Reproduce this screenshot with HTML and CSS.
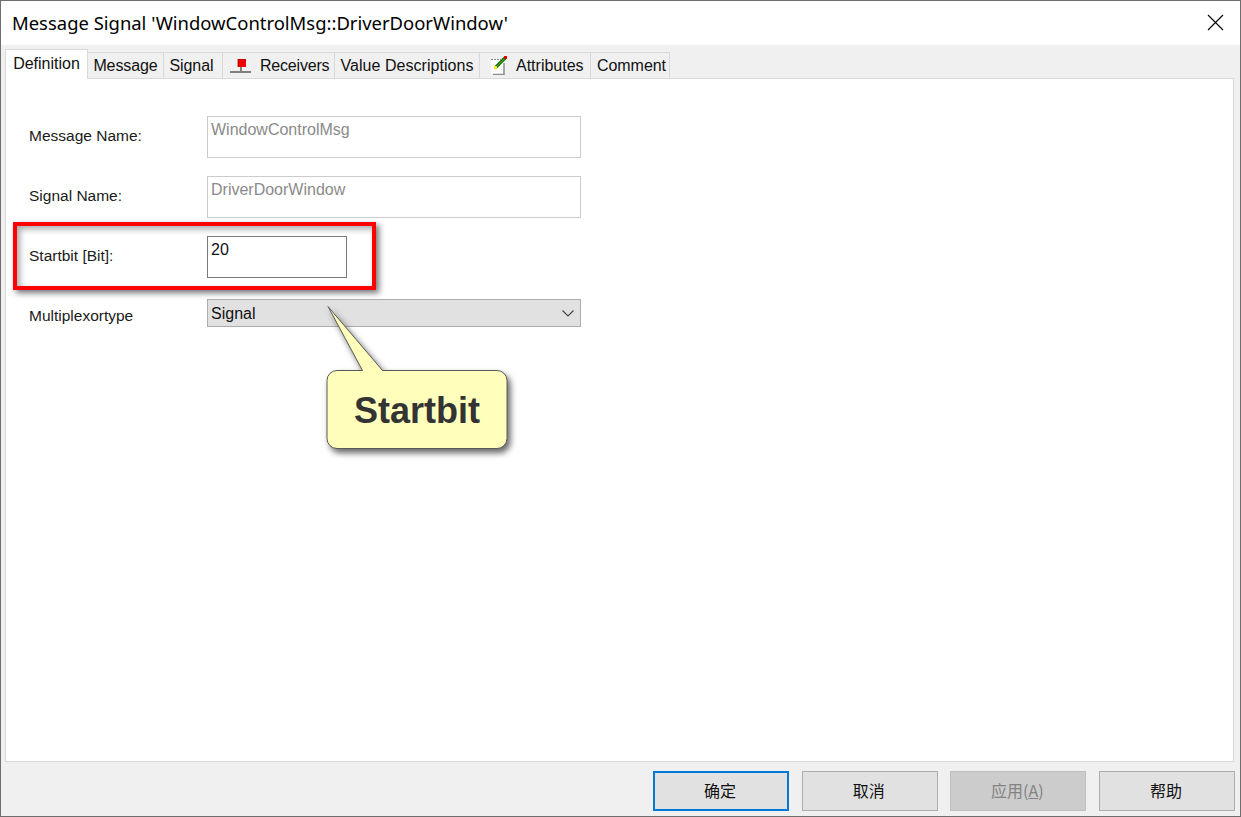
FILE: index.html
```html
<!DOCTYPE html>
<html lang="en">
<head>
<meta charset="utf-8">
<title>Message Signal</title>
<link rel="stylesheet" href="styles.css">
</head>
<body>
<div class="window">
  <header class="titlebar">
    <span class="title">Message Signal 'WindowControlMsg::DriverDoorWindow'</span>
    <svg class="close" width="17" height="17" viewBox="0 0 17 17"><path d="M1 1L16 16M16 1L1 16" stroke="#000" stroke-width="1.1" fill="none"/></svg>
  </header>
  <div class="content">
    <nav class="tabs">
      <div class="tab active t-def">Definition</div>
      <div class="tab t-msg">Message</div>
      <div class="tab t-sig">Signal</div>
      <div class="tab t-rec">
        <svg class="tab-icon" width="22" height="16" viewBox="0 0 22 16"><rect x="0" y="12" width="21" height="2" fill="#808080"/><rect x="10" y="7" width="2" height="5" fill="#808080"/><rect x="8" y="0" width="8" height="8" fill="#f00000"/><path d="M8 8V0h8" fill="none" stroke="#a00000" stroke-width="0.8"/></svg>
        <span>Receivers</span>
      </div>
      <div class="tab t-val">Value Descriptions</div>
      <div class="tab t-att">
        <svg class="tab-icon" width="18" height="19" viewBox="0 0 18 19"><rect x="1" y="3" width="13" height="15" fill="#fff"/><path d="M1 3.500h10" stroke="#8a8a8a" stroke-dasharray="2 1" fill="none"/><path d="M14 7v11.500H3" stroke="#8a8a8a" stroke-width="1.500" fill="none"/><path d="M6 11L15 2" stroke="#0c7a0c" stroke-width="3.200" fill="none"/><path d="M7 10l7-7" stroke="#7f8f00" stroke-width="1" fill="none"/><rect x="4" y="10" width="3" height="3" fill="#f5ea1e"/><rect x="14" y="0" width="3" height="3" fill="#e00000"/></svg>
        <span>Attributes</span>
      </div>
      <div class="tab t-com">Comment</div>
    </nav>
    <main class="panel">
      <div class="row row-first">
        <span class="label">Message Name:</span>
        <div class="field disabled">WindowControlMsg</div>
      </div>
      <div class="row">
        <span class="label">Signal Name:</span>
        <div class="field disabled">DriverDoorWindow</div>
      </div>
      <div class="row">
        <span class="label">Startbit [Bit]:</span>
        <div class="field short">20</div>
      </div>
      <div class="row row-select">
        <span class="label">Multiplexortype</span>
        <div class="select">
          <span>Signal</span>
          <svg width="12" height="7" viewBox="0 0 12 7"><path d="M0.500 0.500L6 6L11.500 0.500" stroke="#404040" stroke-width="1.100" fill="none"/></svg>
        </div>
      </div>
    </main>
    <footer class="buttons">
      <div class="btn primary">确定</div>
      <div class="btn">取消</div>
      <div class="btn off">应用(<u>A</u>)</div>
      <div class="btn">帮助</div>
    </footer>
  </div>
  <div class="highlight"></div>
  <div class="callout">
    <svg class="callout-shape" width="190" height="152" viewBox="0 0 190 152"><path d="M11 65.500H36.500L2 1.500L56.500 65.500H171a10 10 0 0 1 10 10V133.500a10 10 0 0 1-10 10H11a10 10 0 0 1-10-10V75.500a10 10 0 0 1 10-10Z" fill="#ffffbb" stroke="#5a5a5a" stroke-width="1"/></svg>
    <span class="callout-text">Startbit</span>
  </div>
</div>
</body>
</html>
```

FILE: styles.css
```css
* { box-sizing: border-box; }
html, body { margin: 0; padding: 0; background: #fff; }
.window {
  position: relative;
  width: 1241px;
  height: 817px;
  border: 1px solid #6e6e6e;
  display: flex;
  flex-direction: column;
  overflow: hidden;
  font-family: "Liberation Sans", Arial, sans-serif;
  font-size: 16px;
  color: #111;
}
.titlebar {
  height: 44px;
  flex: none;
  background: #fff;
  display: flex;
  align-items: center;
  justify-content: space-between;
  padding: 0 16px 2px 11px;
}
.title {
  font-family: "Noto Sans", sans-serif;
  font-size: 18.450px;
  color: #000;
}
.content {
  flex: 1;
  background: #f0f0f0;
  display: flex;
  flex-direction: column;
  padding: 4px 6px 4px 4px;
}
.tabs {
  display: flex;
  align-items: flex-end;
  height: 30px;
  flex: none;
  position: relative;
  z-index: 1;
}
.tab {
  height: 27px;
  border: 1px solid #d9d9d9;
  border-left: 0;
  border-bottom: 1px solid #d9d9d9;
  background: #f0f0f0;
  display: flex;
  align-items: center;
  justify-content: center;
  white-space: nowrap;
  padding-top: 1px;
}
.tab.active {
  height: 30px;
  background: #fff;
  border-left: 1px solid #d9d9d9;
  border-bottom: 0;
  padding-bottom: 3px;
}
.t-def { width: 83px; }
.t-msg { width: 76px; letter-spacing: -0.1px; }
.t-sig { width: 59px; padding-right: 3px; letter-spacing: -0.1px; }
.t-rec { width: 112px; justify-content: flex-start; padding-left: 7px; letter-spacing: -0.2px; }
.t-rec .tab-icon { margin-right: 8px; margin-top: 1px; }
.t-val { width: 145px; letter-spacing: 0.05px; }
.t-att { width: 111px; justify-content: flex-start; padding-left: 10px; }
.t-att .tab-icon { margin-right: 8px; margin-top: -1px; }
.t-com { width: 79px; padding-left: 3px; letter-spacing: -0.05px; }
.panel {
  height: 684px;
  flex: none;
  margin-top: -1px;
  background: #fff;
  border: 1px solid #d9d9d9;
  padding: 37px 0 0 23px;
}
.row {
  display: flex;
  align-items: center;
  margin-top: 18px;
}
.row-first { margin-top: 0; }
.row-select { margin-top: 21px; }
.label {
  width: 178px;
  font-size: 15.500px;
  flex: none;
  color: #1a1a1a;
  margin-top: -2px;
}
.row-select .label { margin-top: 6px; }
.field {
  width: 374px;
  height: 42px;
  border: 1px solid #7a7a7a;
  background: #fff;
  padding: 4px 3px;
  line-height: 18px;
  color: #111;
}
.field.disabled {
  border-color: #cccccc;
  color: #8a8a8a;
}
.field.short { width: 140px; }
.select {
  width: 374px;
  height: 28px;
  border: 1px solid #adadad;
  background: #e1e1e1;
  display: flex;
  align-items: center;
  justify-content: space-between;
  padding: 1px 6px 0 3px;
}
.buttons {
  display: flex;
  justify-content: flex-end;
  gap: 12.670px;
  padding-top: 9px;
  margin-right: -1px;
}
.btn {
  width: 136px;
  height: 40px;
  background: #e1e1e1;
  border: 1px solid #adadad;
  display: flex;
  align-items: center;
  justify-content: center;
  padding: 0 2px 2px 0;
  font-family: "Noto Sans CJK SC", sans-serif;
  font-size: 16px;
  color: #111;
}
.btn u { text-decoration: underline; }
.btn.primary { border: 2px solid #0078d7; }
.btn.off {
  background: #cccccc;
  border-color: #bfbfbf;
  color: #838383;
}
.highlight {
  position: absolute;
  left: 12px;
  top: 221px;
  width: 363px;
  height: 68px;
  border: 4px solid #ff0000;
  box-shadow: 3px 3px 6px rgba(0,0,0,.55), inset 3px 3px 6px rgba(0,0,0,.35);
}
.callout {
  position: absolute;
  left: 325px;
  top: 304px;
  width: 190px;
  height: 152px;
}
.callout-shape {
  display: block;
  overflow: visible;
  filter: drop-shadow(3px 4px 3px rgba(0,0,0,.6));
}
.callout-text {
  position: absolute;
  left: 28px;
  top: 84px;
  font-size: 36px;
  font-weight: bold;
  line-height: 44px;
  color: #333;
}
```
